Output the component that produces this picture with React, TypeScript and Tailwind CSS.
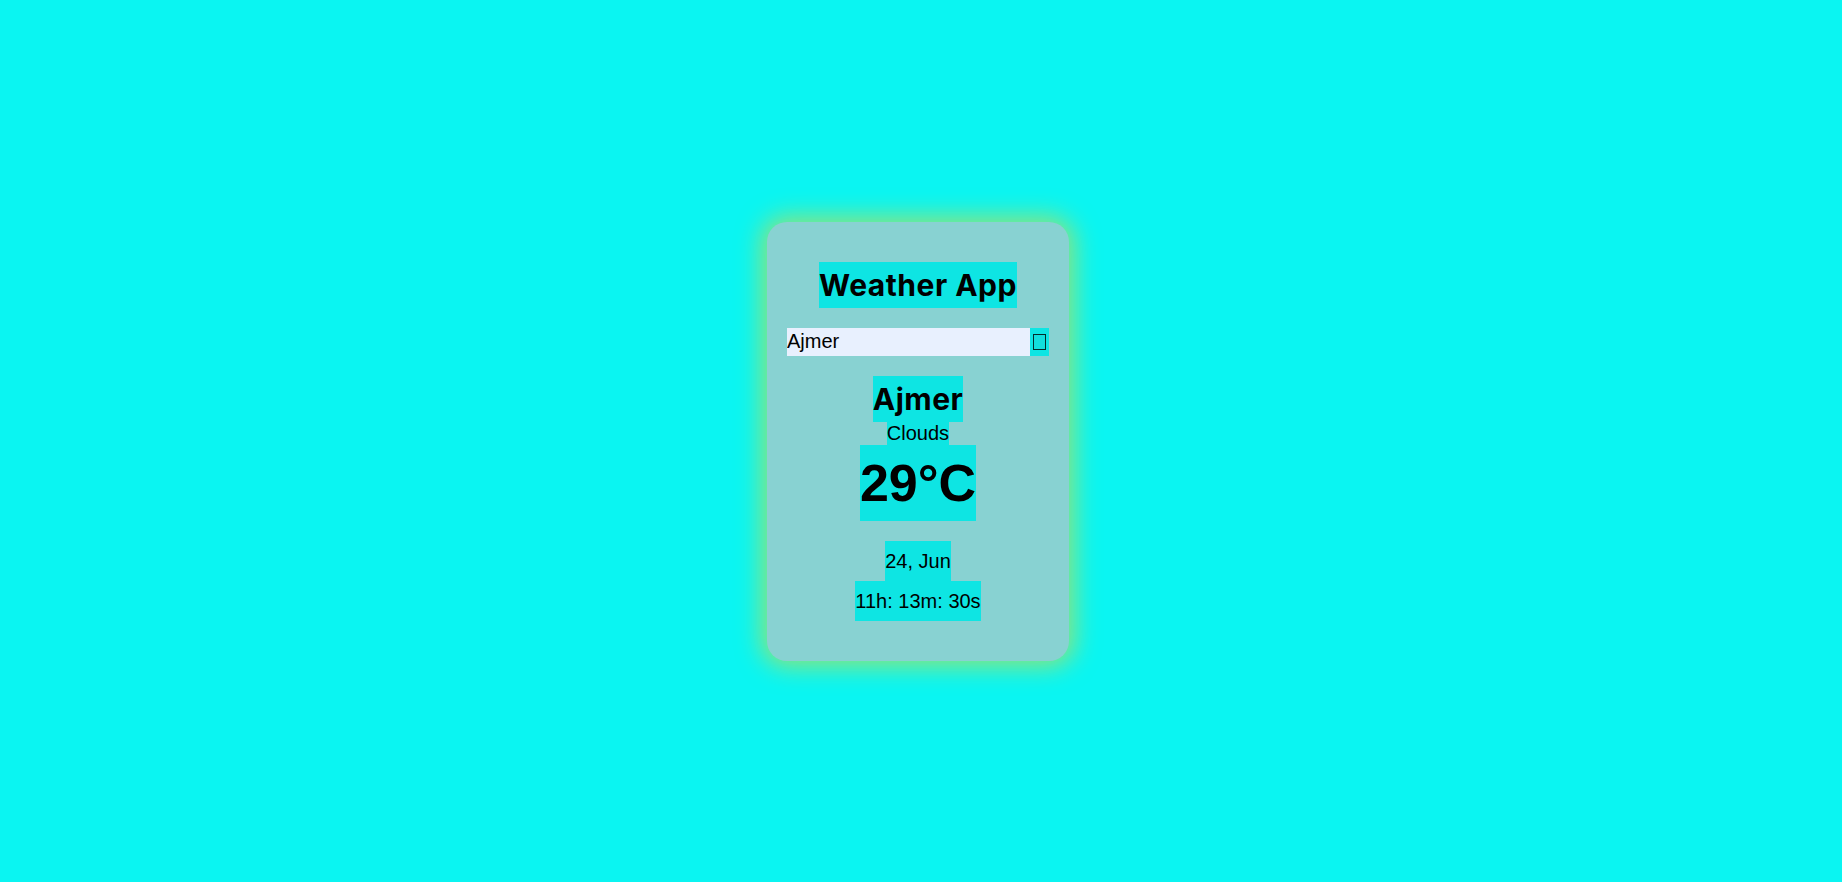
export default function App() {
  const heading = "font-['Inter',sans-serif] font-bold text-[30px] leading-[46px] tracking-[0.5px] bg-[#0ee5e3] text-black";

  return (
    <div className="min-h-screen w-full bg-[#0af5f2] flex items-center justify-center pr-[6px] font-['Liberation_Sans',Arial,sans-serif] text-black">
      <div className="w-[302px] h-[439px] rounded-[20px] bg-[#88d2d2] shadow-[0_0_24px_6px_#8de47c] flex flex-col items-center pt-[40px]">
        <h1 className={heading}>Weather App</h1>

        <div className="mt-[20px] flex h-[28px]">
          <input
            defaultValue="Ajmer"
            className="w-[243px] h-[28px] bg-[#e8f0fe] text-[20px] leading-[23px] px-0 outline-none border-0"
          />
          <button className="w-[19px] h-[28px] bg-[#0ee5e3] flex items-center justify-center">
            <span className="block w-[13px] h-[16px] border-[1.5px] border-black/80 bg-[#12dedd]" />
          </button>
        </div>

        <h2 className={`${heading} mt-[20px]`}>Ajmer</h2>
        <p className="text-[20px] leading-[23px] bg-[#0ee5e3]">Clouds</p>
        <p className="font-bold text-[52px] leading-[76px] bg-[#0ee5e3]">29°C</p>

        <p className="mt-[20px] text-[20px] leading-[40px] bg-[#0ee5e3]">24, Jun</p>
        <p className="text-[20px] leading-[40px] bg-[#0ee5e3]">11h: 13m: 30s</p>
      </div>
    </div>
  );
}
